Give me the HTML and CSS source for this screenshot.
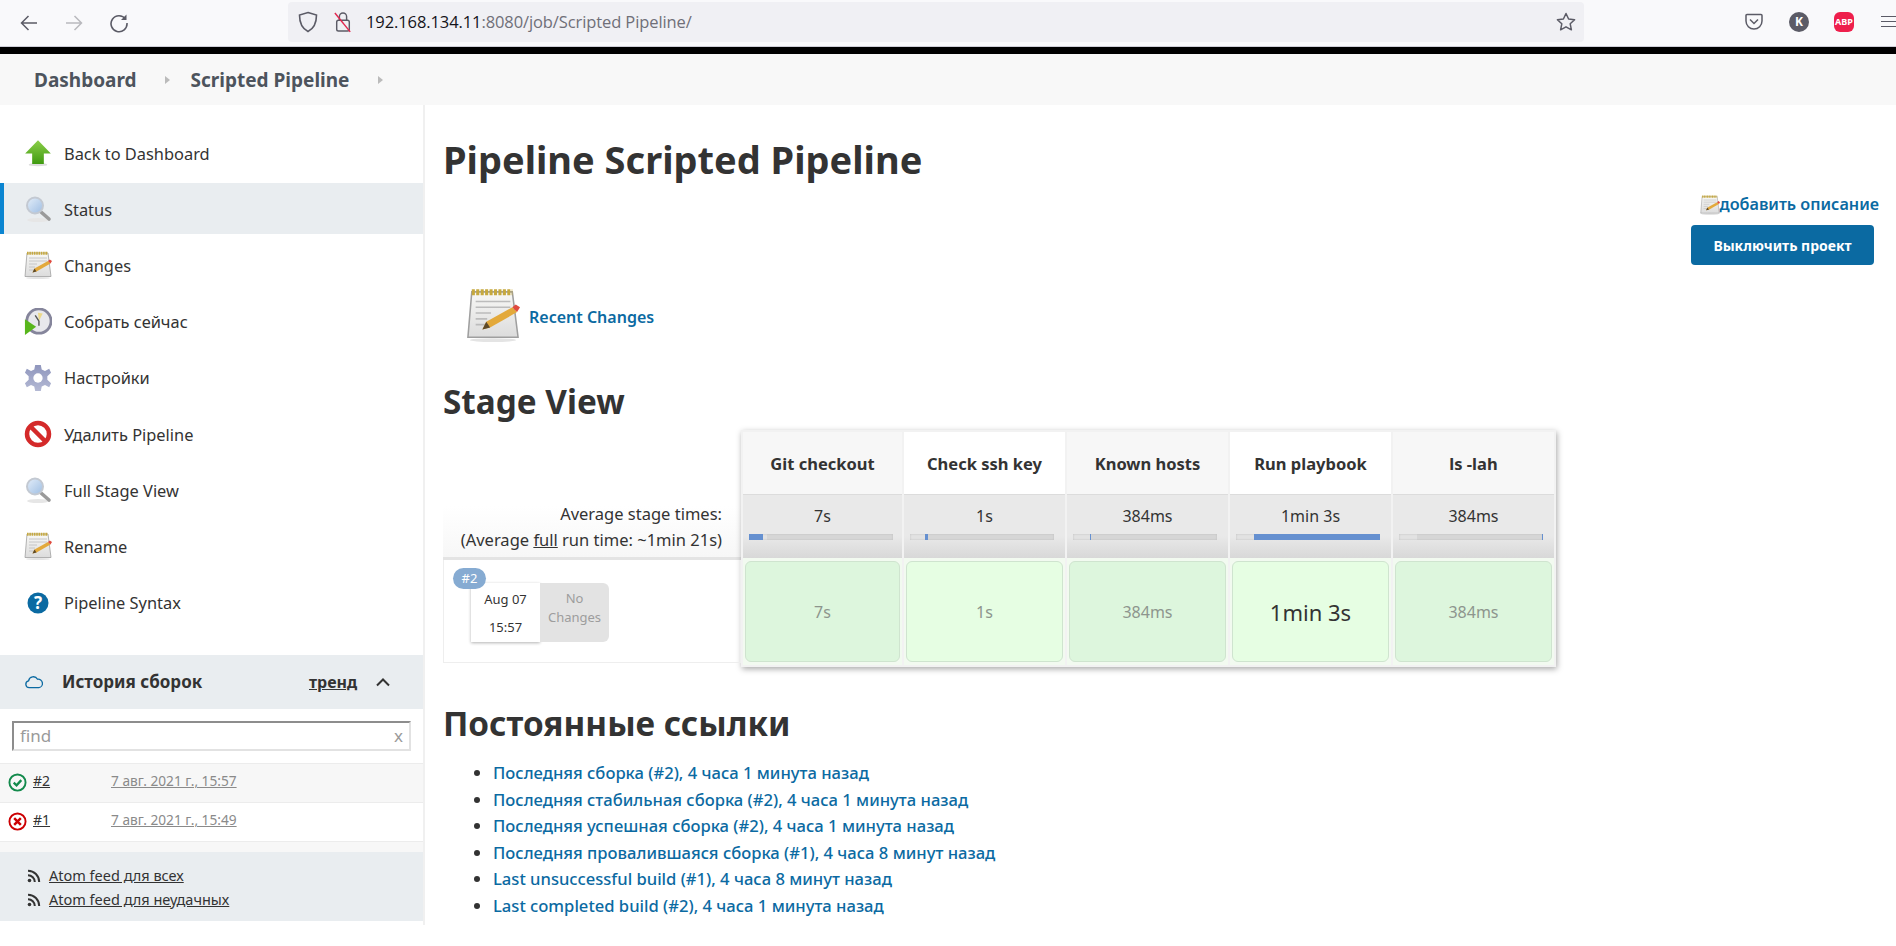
FILE: index.html
```html
<!DOCTYPE html>
<html lang="ru">
<head>
  <meta charset="UTF-8">
  <title>Scripted Pipeline [Jenkins]</title>
  <link rel="stylesheet" href="styles.css">
</head>
<body>
  <svg class="defs" width="0" height="0">
    <defs>
      <linearGradient id="gGreen" x1="0" y1="0" x2="0" y2="1"><stop offset="0" stop-color="#8ccf4a"/><stop offset="1" stop-color="#3f9a10"/></linearGradient>
      <linearGradient id="gGlass" x1="0" y1="0" x2="1" y2="1"><stop offset="0" stop-color="#e4eef9"/><stop offset="1" stop-color="#9dbde3"/></linearGradient>
      <linearGradient id="gGear" x1="0" y1="0" x2="0" y2="1"><stop offset="0" stop-color="#8f96bd"/><stop offset="1" stop-color="#b4b9d4"/></linearGradient>
      <linearGradient id="gPaper" x1="0" y1="0" x2="0" y2="1"><stop offset="0" stop-color="#f8f8f6"/><stop offset="1" stop-color="#dcdcdc"/></linearGradient>
      <symbol id="i-up" viewBox="0 0 24 24">
        <ellipse cx="12" cy="22" rx="8" ry="1.4" fill="#ddd"/>
        <path d="M12 1 23 12.5H17V21.5H7V12.5H1Z" fill="url(#gGreen)"/>
      </symbol>
      <symbol id="i-glass" viewBox="0 0 28 28">
        <ellipse cx="14" cy="25" rx="11" ry="2" fill="#e6e6e6"/>
        <path d="M17 17 25 24" stroke="#9a9a9a" stroke-width="3.6" stroke-linecap="round"/>
        <circle cx="11" cy="10.500" r="8" fill="url(#gGlass)" stroke="#c3c9d2" stroke-width="2"/>
      </symbol>
      <symbol id="i-note" viewBox="0 0 28 28">
        <ellipse cx="14" cy="27" rx="12" ry="1" fill="#e4e4e4"/>
        <path d="M3 2H24L27 25.500H1Z" fill="url(#gPaper)" stroke="#9f9f9f" stroke-width=".8"/>
        <path d="M3 2.200H24" stroke="#c6a93f" stroke-width="3" stroke-dasharray="1.600 .7"/>
        <path d="M5 7H23M5 10H23M5 13H13M5 16H11M5 19H10" stroke="#bcbcbc" stroke-width=".8"/>
        <path d="M8.500 21.500 10.500 17.500 24 10 26.500 12.500 12.500 20.500Z" fill="#e3a93b"/>
        <path d="M24 10 26.500 12.500 28 10 25.800 8.500Z" fill="#df4a3f"/>
        <path d="M8.500 21.500 10.500 17.500 12.500 20.500Z" fill="#5d4a2a"/>
      </symbol>
      <symbol id="i-clock" viewBox="0 0 30 30">
        <circle cx="16" cy="14" r="13" fill="#e8e8ec" stroke="#85859b" stroke-width="3"/>
        <path d="M16 14 15 5 20 6Z" fill="#ecd98a"/>
        <path d="M16 14 12 8M16 14 16 19" stroke="#555" stroke-width="1.500"/>
        <path d="M1 12 13 20 1 29Z" fill="#58b61c"/>
      </symbol>
      <symbol id="i-gear" viewBox="0 0 30 30">
        <path d="M12 1H18L19 6 22.500 7.500 27 5 29 9.500 25 13V17L29 20.500 27 25 22.500 22.500 19 24 18 29H12L11 24 7.500 22.500 3 25 1 20.500 5 17V13L1 9.500 3 5 7.500 7.500 11 6Z" fill="url(#gGear)"/>
        <circle cx="15" cy="15" r="5" fill="#fff"/>
      </symbol>
      <symbol id="i-stop" viewBox="0 0 28 28">
        <circle cx="14" cy="14" r="11" fill="#fff" stroke="#d42a2a" stroke-width="4.500"/>
        <path d="M6.500 6.500 21.500 21.500" stroke="#d42a2a" stroke-width="4.500"/>
      </symbol>
      <symbol id="i-feed" viewBox="0 0 14 14">
        <circle cx="2.500" cy="11.500" r="1.800" fill="#333"/>
        <path d="M1 6.200A6.800 6.800 0 0 1 7.800 13M1 1.800A11.200 11.200 0 0 1 12.200 13" fill="none" stroke="#333" stroke-width="2"/>
      </symbol>
    </defs>
  </svg>

  <div class="toolbar">
    <div class="nav-btns">
      <svg class="tb-icon" viewBox="0 0 20 20"><path d="M18 10H3M9.500 3 2.500 10 9.500 17" fill="none" stroke="#5b5b66" stroke-width="1.500"/></svg>
      <svg class="tb-icon" viewBox="0 0 20 20"><path d="M2 10H17M10.500 3 17.500 10 10.500 17" fill="none" stroke="#b9b9be" stroke-width="1.500"/></svg>
      <svg class="tb-icon" viewBox="0 0 20 20"><path d="M16.500 6A8 8 0 1 0 18 10" fill="none" stroke="#5b5b66" stroke-width="1.600"/><path d="M17.500 1.500V7H12Z" fill="#5b5b66"/></svg>
    </div>
    <div class="urlbar">
      <svg class="ub-shield" viewBox="0 0 20 22"><path d="M10 1.500 18.500 4C18.500 13 16 17.500 10 20.500 4 17.500 1.500 13 1.500 4Z" fill="none" stroke="#5b5b66" stroke-width="1.600"/></svg>
      <svg class="ub-lock" viewBox="0 0 20 24"><rect x="3" y="10" width="14" height="12" rx="2" fill="none" stroke="#5b5b66" stroke-width="1.600"/><path d="M6 10V6A4 4 0 0 1 14 6V10" fill="none" stroke="#5b5b66" stroke-width="1.600"/><path d="M1 2 18 23" stroke="#e22850" stroke-width="1.600"/></svg>
      <span class="url"><span class="url-host">192.168.134.11</span>:8080/job/Scripted Pipeline/</span>
      <svg class="ub-star" viewBox="0 0 20 20"><path d="M10 1.500 12.600 7 18.600 7.700 14.200 11.800 15.400 17.800 10 14.800 4.600 17.800 5.800 11.800 1.400 7.700 7.400 7Z" fill="none" stroke="#5b5b66" stroke-width="1.500" stroke-linejoin="round"/></svg>
    </div>
    <div class="tb-right">
      <svg class="tb-pocket" viewBox="0 0 18 18"><path d="M2 1.500H16A1 1 0 0 1 17 2.500V8A8 8 0 0 1 1 8V2.500A1 1 0 0 1 2 1.500Z" fill="none" stroke="#5b5b66" stroke-width="1.500"/><path d="M5 6.500 9 10.500 13 6.500" fill="none" stroke="#5b5b66" stroke-width="1.500"/></svg>
      <span class="tb-k">K</span>
      <span class="tb-abp">ABP</span>
      <span class="tb-menu"></span>
    </div>
  </div>
  <div class="blackbar"></div>

  <div class="breadcrumb">
    <a class="crumb">Dashboard</a><span class="crumb-arrow"></span>
    <a class="crumb">Scripted Pipeline</a><span class="crumb-arrow"></span>
  </div>

  <div class="page">
    <aside class="sidebar">
      <div class="tasks">
        <a class="task"><svg class="task-icon"><use href="#i-up"/></svg>Back to Dashboard</a>
        <a class="task active"><svg class="task-icon"><use href="#i-glass"/></svg>Status</a>
        <a class="task"><svg class="task-icon"><use href="#i-note"/></svg>Changes</a>
        <a class="task"><svg class="task-icon"><use href="#i-clock"/></svg>Собрать сейчас</a>
        <a class="task"><svg class="task-icon"><use href="#i-gear"/></svg>Настройки</a>
        <a class="task"><svg class="task-icon"><use href="#i-stop"/></svg>Удалить Pipeline</a>
        <a class="task"><svg class="task-icon"><use href="#i-glass"/></svg>Full Stage View</a>
        <a class="task"><svg class="task-icon"><use href="#i-note"/></svg>Rename</a>
        <a class="task"><svg class="task-icon" viewBox="0 0 28 28"><circle cx="14" cy="14" r="10.500" fill="#0b6aa2"/><text x="14" y="19.500" class="help-mark" text-anchor="middle">?</text></svg>Pipeline Syntax</a>
      </div>

      <div class="history">
        <div class="history-head">
          <svg class="cloud" viewBox="0 0 22 16"><path d="M5.500 14.500A4 4 0 0 1 4.800 6.600 5.500 5.500 0 0 1 15 4.800 4.900 4.900 0 0 1 16.500 14.500Z" fill="none" stroke="#0b6aa2" stroke-width="1.500"/></svg>
          <span class="history-title">История сборок</span>
          <a class="trend">тренд</a>
          <svg class="chevron" viewBox="0 0 16 10"><path d="M2 8.500 8 2.500 14 8.500" fill="none" stroke="#333" stroke-width="2"/></svg>
        </div>
        <div class="search-wrap">
          <div class="search"><span>find</span><span>x</span></div>
        </div>
        <div class="build-row odd">
          <svg class="ball" viewBox="0 0 20 20"><circle cx="10" cy="10" r="8.500" fill="none" stroke="#138a4c" stroke-width="2"/><path d="M6 10.200 9 13 14 7.500" fill="none" stroke="#138a4c" stroke-width="2.400"/></svg>
          <a class="build-no">#2</a><a class="build-date">7 авг. 2021 г., 15:57</a>
        </div>
        <div class="build-row">
          <svg class="ball" viewBox="0 0 20 20"><circle cx="10" cy="10" r="8.500" fill="none" stroke="#cc0003" stroke-width="2"/><path d="M6.500 6.500 13.500 13.500M13.500 6.500 6.500 13.500" stroke="#cc0003" stroke-width="2.600"/></svg>
          <a class="build-no">#1</a><a class="build-date">7 авг. 2021 г., 15:49</a>
        </div>
        <div class="history-foot"></div>
        <div class="feeds">
          <a class="feed"><svg class="feed-icon"><use href="#i-feed"/></svg><span>Atom feed для всех</span></a>
          <a class="feed"><svg class="feed-icon"><use href="#i-feed"/></svg><span>Atom feed для неудачных</span></a>
        </div>
      </div>
    </aside>

    <main class="main">
      <h1>Pipeline Scripted Pipeline</h1>
      <div class="actions">
        <a class="add-desc"><svg class="add-desc-icon"><use href="#i-note"/></svg>добавить описание</a>
        <a class="btn">Выключить проект</a>
      </div>
      <div class="recent">
        <svg class="recent-icon"><use href="#i-note"/></svg>
        <a class="link">Recent Changes</a>
      </div>

      <h2 class="stage-title">Stage View</h2>
      <div class="stage">
        <div class="stage-left">
          <div class="avg-label">
            <div>Average stage times:</div>
            <div>(Average <u>full</u> run time: ~1min 21s)</div>
          </div>
          <div class="build-box">
            <span class="badge">#2</span>
            <div class="build-card">
              <div class="build-when"><div>Aug 07</div><div>15:57</div></div>
              <div class="no-changes">No Changes</div>
            </div>
          </div>
        </div>
        <div class="stage-grid">
          <div class="st-col">
            <div class="st-head shade">Git checkout</div>
            <div class="st-avg"><div>7s</div><div class="bar"><div class="bar-fill" style="margin-left:0;width:14px"></div></div></div>
            <div class="st-cell-wrap"><div class="st-cell dark">7s</div></div>
          </div>
          <div class="st-col">
            <div class="st-head">Check ssh key</div>
            <div class="st-avg"><div>1s</div><div class="bar"><div class="bar-fill" style="margin-left:15px;width:3px"></div></div></div>
            <div class="st-cell-wrap"><div class="st-cell">1s</div></div>
          </div>
          <div class="st-col">
            <div class="st-head shade">Known hosts</div>
            <div class="st-avg"><div>384ms</div><div class="bar"><div class="bar-fill" style="margin-left:17px;width:1px"></div></div></div>
            <div class="st-cell-wrap"><div class="st-cell dark">384ms</div></div>
          </div>
          <div class="st-col">
            <div class="st-head">Run playbook</div>
            <div class="st-avg"><div>1min 3s</div><div class="bar"><div class="bar-fill" style="margin-left:18px;width:126px"></div></div></div>
            <div class="st-cell-wrap"><div class="st-cell big">1min 3s</div></div>
          </div>
          <div class="st-col">
            <div class="st-head shade">ls -lah</div>
            <div class="st-avg"><div>384ms</div><div class="bar"><div class="bar-fill" style="margin-left:143px;width:1px"></div></div></div>
            <div class="st-cell-wrap"><div class="st-cell dark">384ms</div></div>
          </div>
        </div>
      </div>

      <h2 class="perma-title">Постоянные ссылки</h2>
      <ul class="perma">
        <li><a class="link">Последняя сборка (#2), 4 часа 1 минута назад</a></li>
        <li><a class="link">Последняя стабильная сборка (#2), 4 часа 1 минута назад</a></li>
        <li><a class="link">Последняя успешная сборка (#2), 4 часа 1 минута назад</a></li>
        <li><a class="link">Последняя провалившаяся сборка (#1), 4 часа 8 минут назад</a></li>
        <li><a class="link">Last unsuccessful build (#1), 4 часа 8 минут назад</a></li>
        <li><a class="link">Last completed build (#2), 4 часа 1 минута назад</a></li>
      </ul>
    </main>
  </div>
</body>
</html>
```

FILE: styles.css
```css
* { box-sizing: border-box; }
html, body { margin: 0; height: 946px; overflow: hidden; }
body { font-family: "Noto Sans", "Open Sans", sans-serif; font-size: 16px; color: #333; background: #fff; }
.defs { position: absolute; }

/* browser chrome */
.toolbar { height: 47px; background: #f9f9fb; border-bottom: 1px solid #cfcfd8; display: flex; align-items: center; }
.nav-btns { width: 288px; display: flex; gap: 25px; padding-left: 19px; }
.tb-icon { width: 20px; height: 20px; }
.urlbar { width: 1296px; height: 40px; background: #f0f0f4; border-radius: 4px; display: flex; align-items: center; padding: 0 8px 0 2px; margin-top: -3px; }
.ub-shield { width: 20px; height: 22px; margin-left: 8px; }
.ub-lock { width: 18px; height: 24px; margin-left: 16px; }
.url { font-family: "Open Sans", sans-serif; font-size: 16.500px; color: #6f6f78; margin-left: 14px; flex: 1; letter-spacing: -0.1px; }
.url-host { color: #15141a; }
.ub-star { width: 20px; height: 20px; }
.tb-right { flex: 1; display: flex; align-items: center; margin-top: -3px; padding-left: 161px; }
.tb-pocket { width: 18px; height: 18px; flex-shrink: 0; }
.tb-k { width: 20px; height: 20px; flex-shrink: 0; border-radius: 50%; background: #5b5b66; color: #fff; font-size: 12px; font-weight: 700; text-align: center; line-height: 20px; margin-left: 26px; }
.tb-abp { width: 20px; height: 20px; flex-shrink: 0; border-radius: 6px; background: #ee1f4c; color: #fff; font-size: 9px; font-weight: 700; text-align: center; line-height: 20px; margin-left: 25px; }
.tb-menu { width: 15px; height: 11px; flex-shrink: 0; border-top: 1.5px solid #5b5b66; border-bottom: 1.5px solid #5b5b66; position: relative; margin-left: 27px; }
.tb-menu::after { content: ""; position: absolute; left: 0; right: 0; top: 3.5px; border-top: 1.5px solid #5b5b66; }
.blackbar { height: 7px; background: #000; }

/* jenkins header */
.breadcrumb { height: 51px; background: #f8f8f8; display: flex; align-items: center; padding: 1px 0 0 34px; font-size: 19px; font-weight: 700; color: #4d545d; }
.crumb-arrow { width: 0; height: 0; border-left: 5px solid #bbb; border-top: 4.5px solid transparent; border-bottom: 4.5px solid transparent; margin: 0 0 0 28px; }
.crumb-arrow + .crumb { margin-left: 21px; }
.crumb + .crumb-arrow + .crumb + .crumb-arrow { margin-left: 29px; }

.page { display: flex; align-items: flex-start; }
.sidebar { width: 425px; height: 820px; border-right: 2px solid #f0f0f0; flex-shrink: 0; }
.tasks { padding-top: 22px; display: flex; flex-direction: column; gap: 5px; }
.task { height: 51.200px; display: flex; align-items: center; padding: 1px 0 0 24px; font-size: 16.400px; color: #333; border-left: 4px solid transparent; }
.task.active { background: #e9edf0; border-left-color: #0b85d1; }
.task-icon { width: 28px; height: 28px; margin-right: 12px; margin-left: -4px; }
.help-mark { font-size: 17px; font-weight: 700; fill: #fff; }

.history { margin-top: 27px; }
.history-head { height: 54px; background: #e9edf0; display: flex; align-items: center; padding-left: 24px; }
.cloud { width: 20px; height: 14px; }
.history-title { font-weight: 700; font-size: 17px; margin-left: 18px; width: 247px; }
.trend { font-weight: 700; text-decoration: underline; }
.chevron { width: 16px; height: 10px; margin-left: 18px; }
.search-wrap { height: 54px; padding: 12px; }
.search { height: 30px; border: 2px solid #e2e2e2; border-top-color: #8d8d8d; border-left-color: #8d8d8d; display: flex; justify-content: space-between; padding: 1px 6px 0; font-size: 17px; line-height: 24px; color: #9a9a9a; }
.build-row { height: 39px; display: flex; align-items: center; padding-left: 8px; border-top: 1px solid #ececec; }
.build-row.odd { background: #f7f7f7; }
.ball { width: 19px; height: 19px; }
.build-no { width: 78px; margin-left: 6px; font-size: 14px; text-decoration: underline; margin-top: -4px; }
.build-date { font-size: 13.700px; color: #8a8a8a; text-decoration: underline; margin-top: -4px; }
.history-foot { height: 11px; background: #f7f7f7; border-top: 1px solid #ececec; }
.feeds { height: 69px; background: #e9edf0; padding: 11px 0 0 27px; }
.feed { display: flex; align-items: center; height: 24px; font-size: 14.500px; text-decoration: underline; }
.feed-icon { width: 14px; height: 14px; margin-right: 8px; margin-top: 3px; }

/* main area */
.main { flex: 1; padding: 0 17px 0 18px; min-width: 0; }
h1 { font-size: 38px; font-weight: 700; margin: 29px 0 0; line-height: 50px; }
.actions { display: flex; flex-direction: column; align-items: flex-end; margin-top: 11px; height: 81px; }
.add-desc { display: flex; align-items: center; color: #0b6aa2; font-size: 16.200px; font-weight: 600; height: 25px; margin-top: -4px; }
.add-desc-icon { width: 20px; height: 20px; margin-top: 3px; }
.btn { width: 183px; height: 40px; margin: 9px 5px 0 0; background: #0b6aa2; color: #fff; font-size: 14px; font-weight: 700; border-radius: 4px; display: flex; align-items: center; justify-content: center; }
.recent { display: flex; align-items: center; margin: 11px 0 0 23px; height: 56px; }
.recent-icon { width: 54px; height: 54px; }
.link { color: #0b6aa2; font-weight: 500; }
.recent .link { margin: 4px 0 0 9px; font-weight: 600; }
.stage-title { font-size: 33.300px; font-weight: 700; margin: 36px 0 0; line-height: 44px; }

.stage { display: flex; margin-top: 7px; }
.stage-left { width: 298px; flex-shrink: 0; }
.avg-label { height: 130px; padding: 71px 19px 0 0; font-size: 16.500px; text-align: right; line-height: 26px; background: linear-gradient(#fff 60%, #f7f7f7); border-bottom: 3px solid #e4e4e4; }
.build-box { height: 103px; border: 1px solid #eee; border-top: none; position: relative; padding: 23px 0 0 27px; }
.badge { position: absolute; left: 9px; top: 8px; width: 33px; height: 21px; border-radius: 11px; background: #86abd2; color: #fff; font-size: 13px; line-height: 21px; text-align: center; }
.build-card { display: flex; width: 138px; height: 59px; }
.build-when { width: 69px; background: #fff; box-shadow: 0 1px 3px rgba(0,0,0,.3); text-align: center; font-size: 13px; line-height: 28px; padding-top: 2px; }
.no-changes { width: 69px; background: #e3e3e3; border-radius: 0 6px 6px 0; text-align: center; font-size: 13px; line-height: 19px; color: #9d9d9d; padding-top: 6px; }

.stage-grid { display: flex; align-self: flex-start; box-shadow: 1px 2px 6px rgba(0,0,0,.35); border: 2px solid #f2f2f2; border-right-width: 0; border-left-width: 2px; }
.st-col { width: 163px; border-right: 2px solid #f2f2f2; }
.st-col:first-child { width: 161px; }
.st-head { height: 62px; background: #fff; font-weight: 700; font-size: 16.500px; display: flex; align-items: center; justify-content: center; }
.st-head.shade { background: #f7f7f7; }
.st-avg { height: 64px; background: linear-gradient(#e9e9e9 65%, #d8d8d8); text-align: center; padding-top: 9px; line-height: 24px; border-top: 1px solid #dcdcdc; }
.bar { height: 6px; width: 144px; margin: 6px 0 0 6px; background: linear-gradient(90deg, #e2e2e2 18px, #d6d6d6 18px); box-shadow: inset 0 0 2px #bbb; }
.bar-fill { height: 6px; background: #6590d0; }
.st-cell-wrap { height: 107px; padding: 3px 2px; background: #f2faf0; }
.st-cell { height: 101px; background: #e6fee3; border: 1px solid #cfe4cf; border-radius: 6px; display: flex; align-items: center; justify-content: center; color: #8d958d; }
.st-cell.dark { background: #ddf6dd; }
.st-cell.big { font-size: 22px; color: #333; }

.perma-title { font-size: 33.300px; font-weight: 700; margin: 34px 0 0; line-height: 44px; }
.perma { margin: 15px 0 0; padding-left: 50px; font-size: 16.600px; }
.perma li { line-height: 26.500px; }
```
